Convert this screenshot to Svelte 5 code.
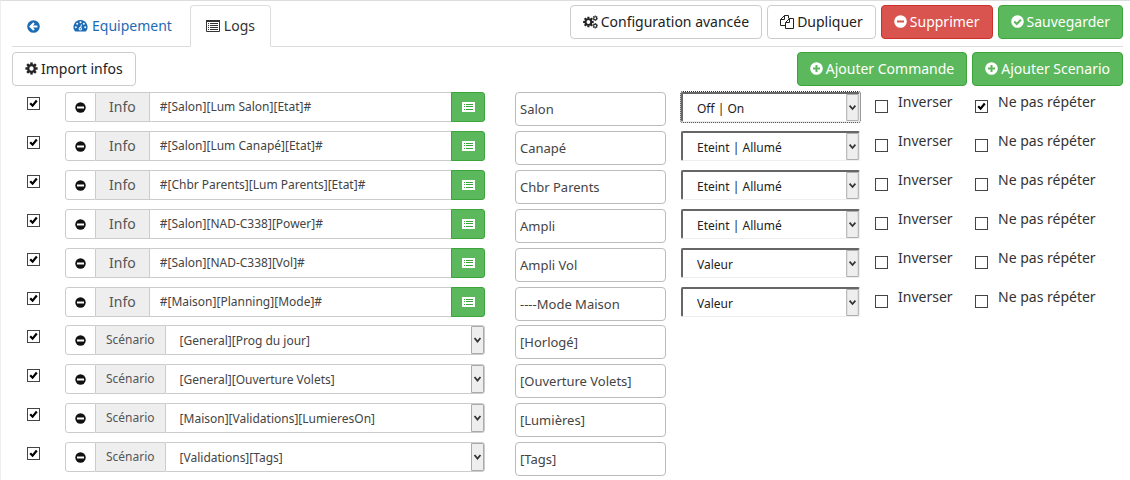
<script>
  const infos = [
    { path: '#[Salon][Lum Salon][Etat]#', name: 'Salon', mode: 'Off | On', repeat: true, active: true },
    { path: '#[Salon][Lum Canapé][Etat]#', name: 'Canapé', mode: 'Eteint | Allumé' },
    { path: '#[Chbr Parents][Lum Parents][Etat]#', name: 'Chbr Parents', mode: 'Eteint | Allumé' },
    { path: '#[Salon][NAD-C338][Power]#', name: 'Ampli', mode: 'Eteint | Allumé' },
    { path: '#[Salon][NAD-C338][Vol]#', name: 'Ampli Vol', mode: 'Valeur' },
    { path: '#[Maison][Planning][Mode]#', name: '----Mode Maison', mode: 'Valeur' }
  ];
  const scenarios = [
    { path: '[General][Prog du jour]', name: '[Horlogé]' },
    { path: '[General][Ouverture Volets]', name: '[Ouverture Volets]' },
    { path: '[Maison][Validations][LumieresOn]', name: '[Lumières]' },
    { path: '[Validations][Tags]', name: '[Tags]' }
  ];
  const teeth = [0, 45, 90, 135, 180, 225, 270, 315];
</script>

{#snippet gear(x, y, s, n)}
  <g transform="translate({x} {y}) scale({s})" fill="none" stroke="currentColor">
    <circle r="3.5" stroke-width="2.4" />
    {#each teeth as a}
      <path d="M0 -4V-6.4" stroke-width={n} transform="rotate({a})" />
    {/each}
  </g>
{/snippet}

{#snippet disc(d)}
  <svg class="icon" width="13" height="13" viewBox="0 0 13 13" aria-hidden="true">
    <circle cx="6.5" cy="6.5" r="6.3" fill="currentColor" />
    <path {d} class="cut" fill="none" stroke-width="2" />
  </svg>
{/snippet}

{#snippet minus()}
  <svg class="icon" width="11" height="11" viewBox="0 0 11 11" aria-hidden="true">
    <circle cx="5.5" cy="5.5" r="5.2" fill="currentColor" />
    <path d="M2 4.5h7v2H2z" fill="#fff" />
  </svg>
{/snippet}

<main>
  <header>
    <nav>
      <a href="#retour" class="back" aria-label="Retour">{@render disc('M10.4 6.5H4.200M7 3L3.500 6.500 7 10')}</a>
      <a href="#equipement">
        <svg class="icon" width="15" height="12" viewBox="0 0 14 12" aria-hidden="true">
          <path d="M7 0a7 7 0 0 0-5.900 10.800q.2.6.8.6h10.200q.6 0 .8-.6A7 7 0 0 0 7 0z" fill="currentColor" />
          <g fill="#fff">
            <circle cx="2.3" cy="7.200" r="1" /><circle cx="3.700" cy="3.800" r="1" />
            <circle cx="7" cy="2.300" r="1" /><circle cx="10.300" cy="3.800" r="1" />
            <circle cx="11.700" cy="7.200" r="1" /><circle cx="6.800" cy="8.700" r="1.700" />
          </g>
          <path d="M6.900 8.200L8 4.500" stroke="#fff" />
          <circle cx="6.800" cy="8.700" r=".7" fill="currentColor" />
        </svg>
        Equipement
      </a>
      <a href="#logs" class="current" aria-current="page">
        <svg class="icon" width="14" height="12" viewBox="0 0 14 12" aria-hidden="true">
          <path d="M.5.5h13v11H.5z" fill="none" stroke="currentColor" />
          <path d="M0 0h14v2H0z" fill="currentColor" />
          <path d="M2 3.500h1M2 5.500h1M2 7.500h1M2 9.500h1M4 3.500h8M4 5.500h8M4 7.500h8M4 9.500h8" stroke="currentColor" />
        </svg>
        Logs
      </a>
    </nav>
    <div class="actions">
      <button class="btn">
        <svg class="icon" width="15" height="14" viewBox="0 0 15 14" aria-hidden="true">
          {@render gear(5.4, 7, 0.82, 2.6)}
          {@render gear(12.2, 3.2, 0.42, 2.6)}
          {@render gear(12.2, 10.8, 0.42, 2.6)}
        </svg>
        Configuration avancée
      </button>
      <button class="btn">
        <svg class="icon" width="14" height="14" viewBox="0 0 14 14" aria-hidden="true">
          <path d="M5.500 10.500h-5v-6l4-4h4v3M4.500.5v4h-4M9.500 3.500h4v10h-8v-6zM9.500 3.500v4h-4" fill="none" stroke="currentColor" stroke-linejoin="round" />
        </svg>
        Dupliquer
      </button>
      <button class="btn danger">{@render disc('M3 6.5h7')} Supprimer</button>
      <button class="btn success">{@render disc('M3.300 6.500l2.500 2.500 4-4.200')} Sauvegarder</button>
    </div>
  </header>

  <div class="toolbar">
    <button class="btn">
      <svg class="icon" width="13" height="13" viewBox="0 0 13 13" aria-hidden="true">
        {@render gear(6.5, 6.5, 0.95, 2.600)}
      </svg>
      Import infos
    </button>
    <div class="actions">
      <button class="btn success">{@render disc('M3 6.5h7M6.5 3v7')} Ajouter Commande</button>
      <button class="btn success">{@render disc('M3 6.5h7M6.5 3v7')} Ajouter Scenario</button>
    </div>
  </div>

  <section>
    {#each infos as row, i}
      <div class="row">
        <input class="enable" type="checkbox" checked aria-label="Activer {row.name}" />
        <div class="group">
          <button class="remove" aria-label="Retirer">{@render minus()}</button>
          <label class="addon" for="info-{i}">Info</label>
          <input id="info-{i}" class="path" type="text" value={row.path} />
          <button class="pick" aria-label="Choisir une commande">
            <svg class="icon" width="13" height="10" viewBox="0 0 13 10" aria-hidden="true">
              <path d="M0 0h13v10H0z" fill="currentColor" />
              <path d="M2 2.500h1M2 4.500h1M2 7.500h1M4 2.500h7M4 4.500h7M4 7.500h7" stroke="#3ba53b" />
            </svg>
          </button>
        </div>
        <input class="name" type="text" value={row.name} aria-label="Nom" />
        <select class="mode" class:active={row.active} aria-label="Affichage">
          <option>{row.mode}</option>
        </select>
        <label class="option"><input type="checkbox" />Inverser</label>
        <label class="option"><input type="checkbox" checked={row.repeat} />Ne pas répéter</label>
      </div>
    {/each}
  </section>

  <section class="scenarios">
    {#each scenarios as row, i}
      <div class="row">
        <input class="enable" type="checkbox" checked aria-label="Activer {row.name}" />
        <div class="group">
          <button class="remove" aria-label="Retirer">{@render minus()}</button>
          <label class="addon small" for="scenario-{i}">Scénario</label>
          <select id="scenario-{i}" class="path">
            <option>{row.path}</option>
          </select>
        </div>
        <input class="name" type="text" value={row.name} aria-label="Nom" />
      </div>
    {/each}
  </section>
</main>

<style>
  :global(body) {
    background: #fff;
  }
  main,
  button,
  input,
  select {
    font-family: 'Noto Sans', 'Open Sans', sans-serif;
    font-size: 14px;
    line-height: 20px;
    color: #333;
  }
  main,
  main * {
    box-sizing: border-box;
  }
  main {
    border-top: 1px solid #ddd;
    border-left: 1px solid #eee;
    padding: 4px 7px 0 11px;
  }
  button,
  input,
  select {
    margin: 0;
    border-radius: 0;
  }
  .icon {
    flex: none;
    display: block;
  }
  .cut {
    stroke: #fff;
  }
  header {
    display: flex;
    justify-content: space-between;
    align-items: flex-start;
    border-bottom: 1px solid #ddd;
  }
  nav {
    display: flex;
    gap: 2px;
    margin-bottom: -1px;
  }
  nav a {
    display: flex;
    align-items: center;
    gap: 4px;
    height: 42px;
    padding: 0 15px;
    border: 1px solid transparent;
    border-radius: 4px 4px 0 0;
    color: #1c6bb5;
    text-decoration: none;
  }
  nav .back {
    padding: 0 14px;
  }
  nav .current {
    border-color: #ddd;
    border-bottom-color: #fff;
    background: #fff;
    color: #333;
  }
  .actions {
    display: flex;
    gap: 5px;
  }
  .btn {
    display: flex;
    align-items: center;
    gap: 3px;
    height: 34px;
    padding: 0 12px 1px;
    border: 1px solid #ccc;
    border-radius: 4px;
    background: #fff;
    color: #222;
    white-space: nowrap;
  }
  .success {
    background: #5cb85c;
    border-color: #3ba53b;
    color: #fff;
  }
  .success .cut {
    stroke: #5cb85c;
  }
  .danger {
    background: #d9534f;
    border-color: #cc302c;
    color: #fff;
  }
  .danger .cut {
    stroke: #d9534f;
  }
  .toolbar {
    display: flex;
    justify-content: space-between;
    padding: 5px 0 6px;
  }
  .row {
    display: grid;
    grid-template-columns: 53px 450fr 165fr 195fr 100px 148px;
    align-items: start;
    height: 39px;
  }
  .scenarios {
    margin-top: -1px;
  }
  input[type='checkbox'] {
    appearance: none;
    flex: none;
    width: 13px;
    height: 13px;
    border: 1px solid #444;
    background: #fff;
  }
  input[type='checkbox']:checked {
    background: #fff url("data:image/svg+xml,%3Csvg xmlns='http://www.w3.org/2000/svg' viewBox='0 0 11 11'%3E%3Cpath d='M2.200 5.200l2.400 2.500 4.200-5.200' fill='none' stroke='%23000' stroke-width='2.200'/%3E%3C/svg%3E") center / 11px 11px no-repeat;
  }
  .enable {
    margin: 5px 0 0 15px;
  }
  .group {
    display: flex;
    height: 30px;
    margin-right: 30px;
  }
  .group > * {
    border: 1px solid #ccc;
  }
  .remove {
    display: flex;
    align-items: center;
    justify-content: center;
    width: 31px;
    padding: 0;
    background: #fff;
    border-radius: 3px 0 0 3px;
    color: #111;
  }
  .addon {
    display: flex;
    align-items: center;
    padding: 0 13px;
    border-width: 1px 0;
    background: #eee;
    color: #555;
  }
  .addon.small {
    padding: 0 10px;
    font-size: 12px;
  }
  .path {
    flex: 1;
    min-width: 0;
    padding: 0 10px;
    background-color: #fff;
    font-size: 12px;
    color: #444;
  }
  select {
    appearance: none;
    background: #fff url("data:image/svg+xml,%3Csvg xmlns='http://www.w3.org/2000/svg' viewBox='0 0 13 28'%3E%3Cpath d='M.5.5h12v27H.5z' fill='%23eee' stroke='%23aaa'/%3E%3Cpath d='M3.500 12l3 3.500 3-3.500' fill='none' stroke='%23333' stroke-width='1.800'/%3E%3C/svg%3E") right center / 13px 28px no-repeat;
  }
  select.path {
    padding: 2px 14px 0 14px;
    border-radius: 0 3px 3px 0;
  }
  .pick {
    display: flex;
    align-items: center;
    justify-content: center;
    width: 34px;
    margin-left: -1px;
    padding: 0;
    background: #5cb85c;
    border-color: #3ba53b;
    border-radius: 0 3px 3px 0;
    color: #fff;
  }
  .name {
    height: 34px;
    min-width: 0;
    margin-right: 14px;
    padding: 0 4px;
    border: 1px solid #bbb;
    border-radius: 4px;
    font-size: 13px;
    color: #444;
  }
  .mode {
    height: 30px;
    min-width: 0;
    margin: 0 15px 0 1px;
    padding: 2px 14px 0 14px;
    border: solid;
    border-width: 2px 1px 1px 2px;
    border-color: #666 #eee #eee #666;
    border-radius: 2px;
    font-size: 12px;
    background-size: 13px 27px;
    color: #222;
  }
  .mode.active {
    outline: 1px dotted #333;
  }
  .option {
    display: flex;
    align-items: flex-start;
    gap: 10px;
    white-space: nowrap;
  }
  .option input {
    margin-top: 8px;
  }
</style>
